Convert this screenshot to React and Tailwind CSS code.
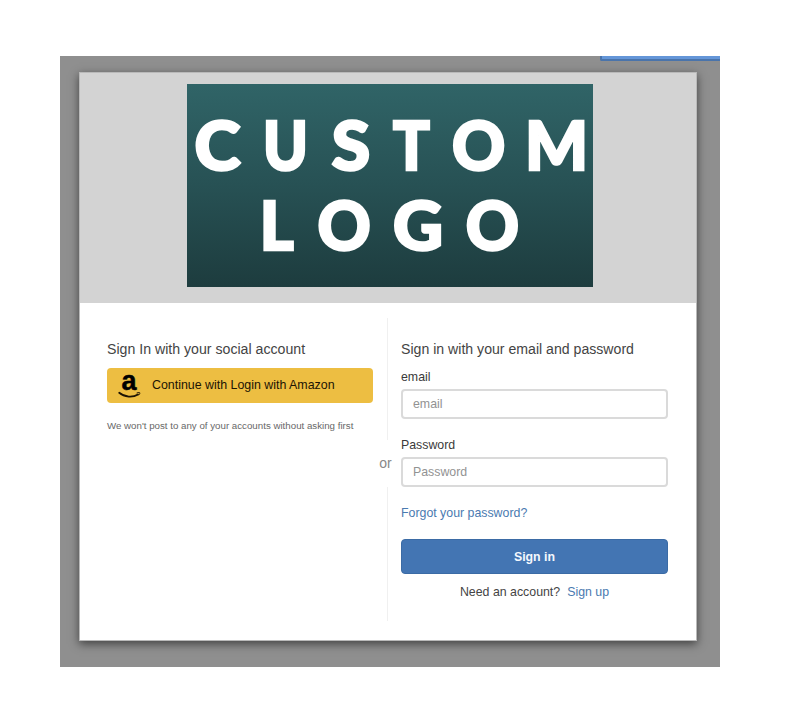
const LOGO_LETTERS = [
  { ch: "C", x: 217.5, y: 170, sx: 1.04 },
  { ch: "U", x: 285.5, y: 170, sx: 0.9 },
  { ch: "S", x: 351, y: 170, sx: 1.04 },
  { ch: "T", x: 411.3, y: 170, sx: 0.91 },
  { ch: "O", x: 478.7, y: 170, sx: 0.98 },
  { ch: "M", x: 556.5, y: 170, sx: 0.99 },
  { ch: "L", x: 276.7, y: 250, sx: 0.97 },
  { ch: "O", x: 344, y: 250, sx: 0.98 },
  { ch: "G", x: 418, y: 250, sx: 1.03 },
  { ch: "O", x: 492.3, y: 250, sx: 0.98 },
];

function Logo() {
  return (
    <svg viewBox="187 84 406 203" className="block h-[203px] w-[406px] bg-linear-to-b from-[#306467] via-[#275154] to-[#1d3c3e]" role="img" aria-label="Custom logo">
      {LOGO_LETTERS.map((l, i) => (
        <text
          key={i}
          transform={`translate(${l.x} ${l.y}) scale(${l.sx} 1)`}
          textAnchor="middle"
          strokeWidth="2.6"
          className="fill-white stroke-white font-['Lato',sans-serif] text-[67px] font-black"
        >
          {l.ch}
        </text>
      ))}
    </svg>
  );
}

function AmazonMark() {
  return (
    <svg viewBox="0 0 24 26" className="h-[26px] w-[24px] overflow-visible" fill="none" aria-hidden="true">
      <text x="3.4" y="17" strokeWidth="0.5" className="fill-black stroke-black font-['Liberation_Sans',sans-serif] text-[27px] font-bold" textLength="15" lengthAdjust="spacingAndGlyphs">a</text>
      <path d="M1.2 19.8C6.5 24.4 15 24.6 20 21.4" stroke="#1c1404" strokeWidth="1.8" strokeLinecap="round" />
      <path d="M19 19.9c1.4-.5 2.6-.6 2.8-.1.2.5-.2 1.5-1 2.2" stroke="#1c1404" strokeWidth="1" strokeLinecap="round" />
    </svg>
  );
}

function Field({ label, type, className }) {
  return (
    <label className={className}>
      <span className="block h-[14px] leading-[14px] text-[#3a3a3a]">{label}</span>
      <input
        type={type}
        placeholder={label}
        className="mt-[5px] block h-[30px] w-full rounded-[4px] border-2 border-[#dadada] bg-white px-[10px] placeholder:text-[#929292]"
      />
    </label>
  );
}

export default function App() {
  return (
    <div className="h-[726px] w-[790px] bg-white px-[60px] pt-[56px] font-['Liberation_Sans',Arial,sans-serif] text-[12.35px] text-[#444]">
      <div className="relative h-[611px] w-[660px] overflow-hidden bg-[#8f8f8f] pt-4 pl-[19px]">
        <div className="absolute top-0 right-0 h-[5px] w-[120px] rounded-bl-[2px] border-b-2 border-l-2 border-[#4a74ab] bg-[#6496d8]" />
        <main className="h-[569px] w-[618px] border border-[#b9b9b9] bg-white shadow-[0_3px_9px_rgba(0,0,0,0.55)]">
          <header className="flex h-[230px] justify-center bg-[#d3d3d3] pt-[11px] pl-[3px]">
            <Logo />
          </header>
          <div className="flex pt-[15px]">
            <section className="w-[293px] pt-[23px] pl-[27px]">
              <h2 className="h-4 text-[14.15px] leading-4 whitespace-nowrap">Sign In with your social account</h2>
              <button className="mt-[11px] flex h-[35px] w-[266px] items-center rounded-[4px] bg-[#edbe42] pl-[11px] text-[#1c1404]">
                <AmazonMark />
                <span className="ml-[10px] text-[12.4px] whitespace-nowrap">Continue with Login with Amazon</span>
              </button>
              <p className="mt-4 text-[9.73px] leading-[14px] whitespace-nowrap text-[#686868]">
                We won't post to any of your accounts without asking first
              </p>
            </section>
            <div className="flex h-[303px] w-[28px] flex-col items-center">
              <div className="h-[122px] w-px bg-[#f0f0f0]" />
              <span className="flex h-[47px] items-center pr-[3px] text-[14px] text-[#888]">or</span>
              <div className="w-px flex-1 bg-[#f0f0f0]" />
            </div>
            <form className="flex w-[267px] flex-col pt-[23px]">
              <h2 className="h-4 text-[14.12px] leading-4 whitespace-nowrap">Sign in with your email and password</h2>
              <Field label="email" type="text" className="mt-[13px]" />
              <Field label="Password" type="password" className="mt-[19px]" />
              <a className="mt-[19px] h-[14px] leading-[14px] text-[#4a7ab0]">Forgot your password?</a>
              <button type="button" className="mt-[19px] h-[35px] rounded-[4px] border border-[#3b6ba5] bg-[#4375b3] pt-px font-bold text-[#f4f8fd]">Sign in</button>
              <p className="mt-[11px] text-center leading-[14px]">
                Need an account?<a className="ml-[7px] text-[#4a7ab0]">Sign up</a>
              </p>
            </form>
          </div>
        </main>
      </div>
    </div>
  );
}
